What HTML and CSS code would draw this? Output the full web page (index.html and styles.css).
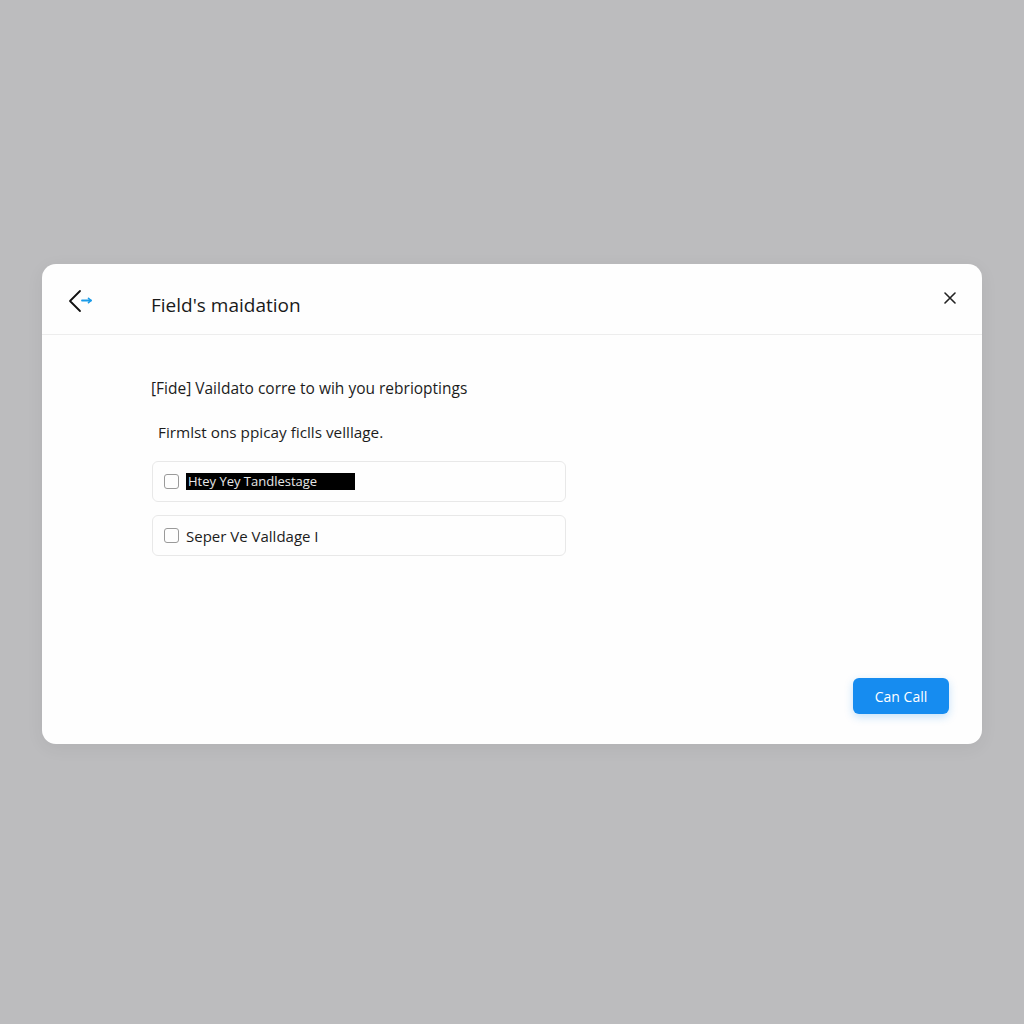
FILE: index.html
```html
<!DOCTYPE html>
<html>
<head>
<meta charset="utf-8">
<link rel="stylesheet" href="styles.css">
</head>
<body>
<div class="dialog">
  <div class="header">
    <span class="back">
      <svg width="26" height="24" viewBox="0 0 26 24">
        <path d="M12 2 L2 12 L12 22" fill="none" stroke="#111" stroke-width="1.8" stroke-linecap="round" stroke-linejoin="round"/>
        <path d="M14 11.5 H23" stroke="#1a9be8" stroke-width="1.8" stroke-linecap="round"/>
        <path d="M20.5 9.3 L23 11.5 L20.5 13.7" fill="none" stroke="#1a9be8" stroke-width="1.6" stroke-linecap="round" stroke-linejoin="round"/>
      </svg>
    </span>
    <h1 class="title">Field's maidation</h1>
    <span class="close">
      <svg width="12" height="12" viewBox="0 0 12 12">
        <path d="M1 1 L11 11 M11 1 L1 11" stroke="#222" stroke-width="1.6" stroke-linecap="round"/>
      </svg>
    </span>
  </div>
  <div class="body">
    <p class="lead">[Fide] Vaildato corre to wih you rebrioptings</p>
    <p class="sub">Firmlst ons ppicay ficlls velllage.</p>
    <div class="options">
      <label class="option"><span class="box"></span><span class="label hl">Htey Yey Tandlestage</span></label>
      <label class="option"><span class="box"></span><span class="label">Seper Ve Valldage I</span></label>
    </div>
    <div class="actions">
      <button class="primary">Can Call</button>
    </div>
  </div>
</div>
</body>
</html>
```

FILE: styles.css
```css
html, body {
  margin: 0;
  padding: 0;
}
body {
  background: #bcbcbe;
  width: 1024px;
  height: 1024px;
  padding: 264px 0 0 42px;
  box-sizing: border-box;
  font-family: "Open Sans", "Noto Sans", sans-serif;
  color: #1c1c1c;
}
.dialog {
  width: 940px;
  height: 480px;
  background: #fefefe;
  border-radius: 14px;
  box-shadow: 0 4px 18px rgba(0,0,0,0.06);
  display: flex;
  flex-direction: column;
  overflow: hidden;
}
.header {
  height: 71px;
  flex: none;
  display: flex;
  align-items: center;
  padding: 0 26px;
  border-bottom: 1px solid #ededed;
  box-sizing: border-box;
}
.back {
  display: flex;
  width: 26px;
  height: 24px;
  margin-top: 4px;
}
.title {
  margin: 12px 0 0 57px;
  font-size: 19px;
  font-weight: 400;
  color: #1a1a1a;
  flex: 1;
}
.close {
  display: flex;
  margin-top: -2px;
}
.body {
  flex: 1;
  display: flex;
  flex-direction: column;
  padding: 43px 33px 30px 109px;
}
.lead {
  margin: 0;
  font-size: 15.5px;
  line-height: 20px;
  color: #1c1c1c;
}
.sub {
  margin: 24px 0 0 7px;
  font-size: 15.3px;
  line-height: 20px;
  color: #1c1c1c;
}
.options {
  margin-top: 19px;
  display: flex;
  flex-direction: column;
  gap: 13px;
  width: 414px;
  margin-left: 1px;
}
.option {
  height: 41px;
  box-sizing: border-box;
  border: 1px solid #e8e8e8;
  border-radius: 6px;
  display: flex;
  align-items: center;
  padding-left: 11px;
  gap: 7px;
}
.box {
  width: 13px;
  height: 13px;
  border: 1px solid #9a9a9a;
  border-radius: 3px;
  flex: none;
}
.label {
  font-size: 15px;
  color: #1c1c1c;
}
.hl {
  background: #000;
  color: #e6e6e6;
  font-size: 13px;
  padding: 0 38px 0 2px;
  line-height: 17px;
}
.actions {
  margin-top: auto;
  display: flex;
  justify-content: flex-end;
}
.primary {
  width: 96px;
  height: 36px;
  border: none;
  border-radius: 6px;
  background: #168cf0;
  color: #fff;
  font-family: inherit;
  font-size: 14px;
  box-shadow: 0 3px 8px rgba(22,140,240,0.25);
}
```
